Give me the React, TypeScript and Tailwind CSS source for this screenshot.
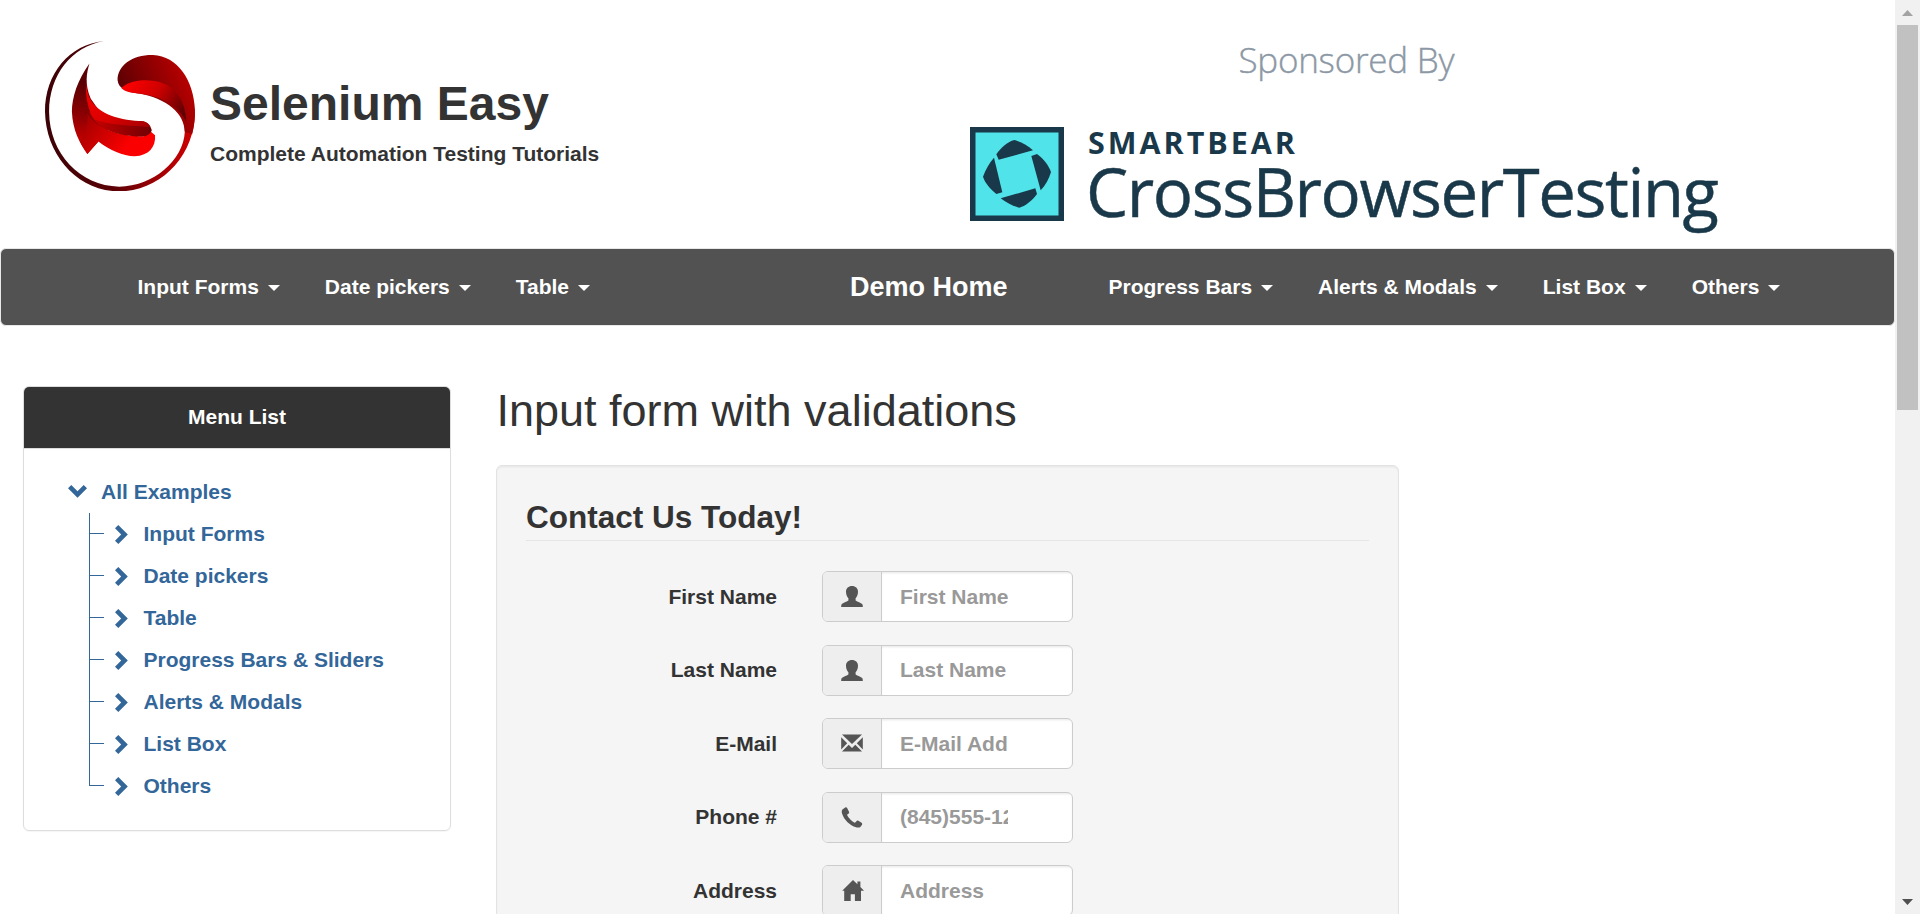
import React from "react";

const navLeft = ["Input Forms", "Date pickers", "Table"];
const navRight = ["Progress Bars", "Alerts & Modals", "List Box", "Others"];
const examples = ["Input Forms", "Date pickers", "Table", "Progress Bars & Sliders", "Alerts & Modals", "List Box", "Others"];

function NavItem({ label }: { label: string }) {
  return (
    <li className="flex items-center px-[22.5px]">
      <a className="whitespace-nowrap">{label}</a>
      <svg className="ml-[9px] mt-[3px]" width="12" height="6" viewBox="0 0 12 6" fill="white">
        <path d="M0 0H12L6 6Z" />
      </svg>
    </li>
  );
}

function BrandLogo() {
  return (
    <svg width="150" height="150" viewBox="110 123 368 449" preserveAspectRatio="none">
      <defs>
        <linearGradient id="ring" x1="110" y1="0" x2="478" y2="0" gradientUnits="userSpaceOnUse">
          <stop offset="0" stopColor="#3c0206" />
          <stop offset="0.45" stopColor="#5a0206" />
          <stop offset="0.75" stopColor="#a00004" />
          <stop offset="1" stopColor="#d00000" />
        </linearGradient>
        <linearGradient id="crown" x1="300" y1="250" x2="470" y2="190" gradientUnits="userSpaceOnUse">
          <stop offset="0" stopColor="#620003" />
          <stop offset="1" stopColor="#c40000" />
        </linearGradient>
        <linearGradient id="fold" x1="310" y1="260" x2="455" y2="330" gradientUnits="userSpaceOnUse">
          <stop offset="0" stopColor="#fb0000" />
          <stop offset="0.45" stopColor="#d00000" />
          <stop offset="1" stopColor="#5e0003" />
        </linearGradient>
        <linearGradient id="wing" x1="240" y1="260" x2="190" y2="440" gradientUnits="userSpaceOnUse">
          <stop offset="0" stopColor="#5a0003" />
          <stop offset="0.5" stopColor="#8c0003" />
          <stop offset="1" stopColor="#d20000" />
        </linearGradient>
        <linearGradient id="belly" x1="200" y1="380" x2="310" y2="440" gradientUnits="userSpaceOnUse">
          <stop offset="0" stopColor="#a80000" />
          <stop offset="1" stopColor="#fb0000" />
        </linearGradient>
        <linearGradient id="sweep" x1="215" y1="270" x2="370" y2="385" gradientUnits="userSpaceOnUse">
          <stop offset="0" stopColor="#f20000" />
          <stop offset="0.5" stopColor="#d80000" />
          <stop offset="1" stopColor="#a00002" />
        </linearGradient>
        <linearGradient id="shade" x1="225" y1="370" x2="372" y2="390" gradientUnits="userSpaceOnUse">
          <stop offset="0" stopColor="#c80000" />
          <stop offset="1" stopColor="#700003" />
        </linearGradient>
      </defs>
      <path fill="url(#ring)" d="M255 123C170 133 110 220 110 335C112 465 190 573 292 573C394 573 478 466 478 335L456 350C452 370 452 380 453 395C450 480 375 559 292 559C195 557 121 460 120 335C120 225 175 140 255 123Z" />
      <path fill="url(#crown)" d="M288 240C288 195 325 164 375 165C435 168 475 240 478 330C478 355 476 380 471 402L453 395C452 340 410 295 340 280C315 277 290 268 288 240Z" />
      <path fill="url(#fold)" d="M297 264C320 240 350 238 380 243C425 252 455 295 457 366C440 320 400 290 345 281C325 279 308 277 297 264Z" />
      <path fill="url(#wing)" d="M219 190C190 240 176 290 176 335C178 390 195 430 214 461L241 424L270 380L222 295C207 250 212 220 219 190Z" />
      <path fill="url(#belly)" d="M214 340C235 385 290 408 352 408L370 395L380 405C382 440 365 466 330 468C300 468 270 450 241 424L214 461C208 450 200 435 196 424C210 400 215 370 214 340Z" />
      <path fill="url(#shade)" d="M219 335C245 358 300 363 350 363C362 366 369 376 372 390C368 405 355 409 345 409C285 409 235 385 219 335Z" />
      <path fill="url(#sweep)" d="M219 190C210 225 207 250 218 290C238 345 300 362 350 363C360 365 366 372 369 380C320 378 260 372 232 358C209 325 204 240 219 190Z" />
    </svg>
  );
}

function SponsorLogo() {
  return (
    <svg width="760" height="240" viewBox="960 0 760 240" fill="#193849">
      <text x="1238.5" y="72.5" fontSize="35" fontWeight="300" fontFamily="'Open Sans', 'Noto Sans', sans-serif" fill="#8c98a5" stroke="#8c98a5" strokeWidth="0.4" textLength="216">Sponsored By</text>
      <rect x="970" y="127" width="94" height="94" />
      <rect x="975.5" y="132.5" width="83" height="83" fill="#50e4ea" />
      <g transform="translate(940 20) scale(0.33333)">
        <path d="M169 403C183 383 203 365 223 360C243 366 264 377 279 391L176 419Z" />
        <path d="M274 408L291 402C312 417 326 437 333 456C327 477 317 495 302 511Z" />
        <path d="M182 535L286 505L291 522C276 542 258 557 238 563C217 558 198 548 182 535Z" />
        <path d="M162 413L187 517L169 522C150 506 135 489 129 470C137 449 147 430 162 413Z" />
      </g>
      <text x="1088" y="154" fontSize="30.5" fontWeight="700" fontFamily="'Open Sans', 'Noto Sans', sans-serif" textLength="207">SMARTBEAR</text>
      <text x="1086" y="216.5" fontSize="67" fontWeight="400" fontFamily="'Open Sans', 'Noto Sans', sans-serif" stroke="#193849" strokeWidth="0.5" textLength="633">CrossBrowserTesting</text>
    </svg>
  );
}

const icons = {
  user: <path d="M11 0C14.5 0 17 2.2 17 5.8C17 8.8 16 10.7 14.6 12.2V14.4C16.5 15.6 20 16.8 21.2 18C21.8 18.8 21.8 20 21.8 21H0.2C0.2 20 0.2 18.8 0.8 18C2 16.8 5.5 15.6 7.4 14.4V12.2C6 10.7 5 8.8 5 5.8C5 2.2 7.5 0 11 0Z" />,
  mail: (
    <>
      <path d="M1 1.5H21L11 11Z" />
      <path d="M0.2 4.2L6.2 10.2L0.2 16.4Z" />
      <path d="M21.8 4.2L15.8 10.2L21.8 16.4Z" />
      <path d="M7.7 11.8L11 15L14.3 11.8L21 18.5H1Z" />
    </>
  ),
  phone: <path d="M4.6 0.2L1.4 2.4C0.6 3 0.6 5.4 1.2 7C3 12.6 8.6 18.2 14.2 20C16.4 20.8 18.4 20.8 19.4 20L21 17.8C21.4 17 21.2 16.4 20.6 15.8L17.4 13.8C16.6 13.4 15.8 13.6 15.2 14.4L14 15.8C11 14.6 7.4 11 6 7.8L7.4 6.8C8.2 6.2 8.4 5.6 8 4.8L6 0.8C5.6 0.2 5.2 0 4.6 0.2Z" />,
  home: <path d="M12 0L16.4 4.2V1.6H19.4V7L23 10.8H20V21H13.9V14.2H9.7V21H3.2V10.8H1.2Z" />,
};

type IconName = keyof typeof icons;

const fields: { label: string; placeholder: string; icon: IconName }[] = [
  { label: "First Name", placeholder: "First Name", icon: "user" },
  { label: "Last Name", placeholder: "Last Name", icon: "user" },
  { label: "E-Mail", placeholder: "E-Mail Address", icon: "mail" },
  { label: "Phone #", placeholder: "(845)555-1212", icon: "phone" },
  { label: "Address", placeholder: "Address", icon: "home" },
];

function Field({ label, placeholder, icon }: { label: string; placeholder: string; icon: IconName }) {
  return (
    <div className="mb-[22.5px] flex h-[51px] items-center">
      <label className="mr-[45px] w-[251px] text-right">{label}</label>
      <div className="flex h-[51px] w-[251px] overflow-hidden rounded-[6px] border border-[#ccc] bg-white">
        <span className="flex w-[59px] shrink-0 items-center justify-center border-r border-[#ccc] bg-[#eee]">
          <svg width="22" height="21" viewBox="0 0 22 21" fill="#555" overflow="visible">
            {icons[icon]}
          </svg>
        </span>
        <input
          className="min-w-0 flex-1 pr-[64px] pl-[18px] font-bold shadow-[inset_0_1.5px_1.5px_rgba(0,0,0,0.075)] outline-none placeholder:text-[#999] placeholder:opacity-100"
          placeholder={placeholder}
        />
      </div>
    </div>
  );
}

export default function App() {
  return (
    <div className="flex h-[914px] w-[1920px] overflow-hidden bg-white font-['Liberation_Sans',Arial,sans-serif] text-[21px] leading-[30px] font-bold text-[#333]">
      <div className="flex h-full w-[1895px] flex-col overflow-hidden">
        <header className="flex h-[248px] shrink-0 justify-between pr-[175px] pl-[45px]">
          <div className="flex pt-[41px]">
            <BrandLogo />
            <div className="ml-[15px] pt-[36px]">
              <h1 className="text-[48px] leading-[54px]">Selenium Easy</h1>
              <p className="pt-[8px]">Complete Automation Testing Tutorials</p>
            </div>
          </div>
          <SponsorLogo />
        </header>

        <nav className="flex h-[78px] shrink-0 rounded-[6px] border border-[#e7e7e7] bg-[#525252] text-white">
          <ul className="flex w-[733px] pb-[1px] pl-[114px]">
            {navLeft.map((l) => <NavItem key={l} label={l} />)}
          </ul>
          <a className="flex w-[352px] items-center pb-[1px] pl-[116px] text-[27px]">Demo Home</a>
          <ul className="flex pb-[1px]">
            {navRight.map((l) => <NavItem key={l} label={l} />)}
          </ul>
        </nav>

        <div className="flex items-start pt-[60px] pl-[23px]">
          <aside className="h-[445px] w-[428px] shrink-0 rounded-[6px] border border-[#ddd] shadow-[0_1px_1px_rgba(0,0,0,0.04)]">
            <div className="flex h-[62px] items-center justify-center rounded-t-[5px] border-b border-[#ddd] bg-[#333] pb-[2px] text-white">Menu List</div>
            <div className="pt-[22px] pl-[44px] text-[#336699]">
              <div className="flex h-[42px] items-center">
                <svg className="mb-[2px]" width="19" height="13" viewBox="0 0 19 13" fill="#336699">
                  <path d="M0 3.3L3.3 0L9.5 6.2L15.7 0L19 3.3L9.5 12.8Z" />
                </svg>
                <span className="ml-[14px]">All Examples</span>
              </div>
              <ul className="ml-[21px]">
                {examples.map((item, i) => (
                  <li key={item} className="flex h-[42px]">
                    <span className="flex w-[15px] flex-col">
                      <span className="h-[21px] border-b border-l border-[#336699]" />
                      <span className={i === examples.length - 1 ? "h-[21px]" : "h-[21px] border-l border-[#336699]"} />
                    </span>
                    <span className="flex items-center">
                      <svg className="ml-[11px]" width="13" height="19" viewBox="0 0 13 19" fill="#336699">
                        <path d="M3.3 0L0 3.3L6.2 9.5L0 15.7L3.3 19L12.8 9.5Z" />
                      </svg>
                      <span className="ml-[15.5px]">{item}</span>
                    </span>
                  </li>
                ))}
              </ul>
            </div>
          </aside>

          <main className="ml-[45px] w-[903px]">
            <h2 className="pb-[30px] pl-[0.5px] text-[45px] leading-[49px] font-normal">Input form with validations</h2>
            <section className="rounded-[6px] border border-[#e3e3e3] bg-[#f5f5f5] px-[29px] pt-[28px] shadow-[inset_0_1.5px_1.5px_rgba(0,0,0,0.05)]">
              <h3 className="mb-[30px] border-b border-[#e5e5e5] text-[31.5px] leading-[46px]">Contact Us Today!</h3>
              {fields.map((f) => <Field key={f.label} {...f} />)}
            </section>
          </main>
        </div>
      </div>

      <div className="flex h-full w-[25px] shrink-0 flex-col items-center bg-[#f1f1f1]">
        <div className="flex h-[25px] items-center">
          <svg width="11" height="6" viewBox="0 0 11 6" fill="#a3a3a3"><path d="M0 6L5.5 0L11 6Z" /></svg>
        </div>
        <div className="h-[385px] w-[21px] bg-[#c1c1c1]" />
        <div className="mt-auto flex h-[25px] items-center">
          <svg width="11" height="6" viewBox="0 0 11 6" fill="#505050"><path d="M0 0L5.5 6L11 0Z" /></svg>
        </div>
      </div>
    </div>
  );
}
